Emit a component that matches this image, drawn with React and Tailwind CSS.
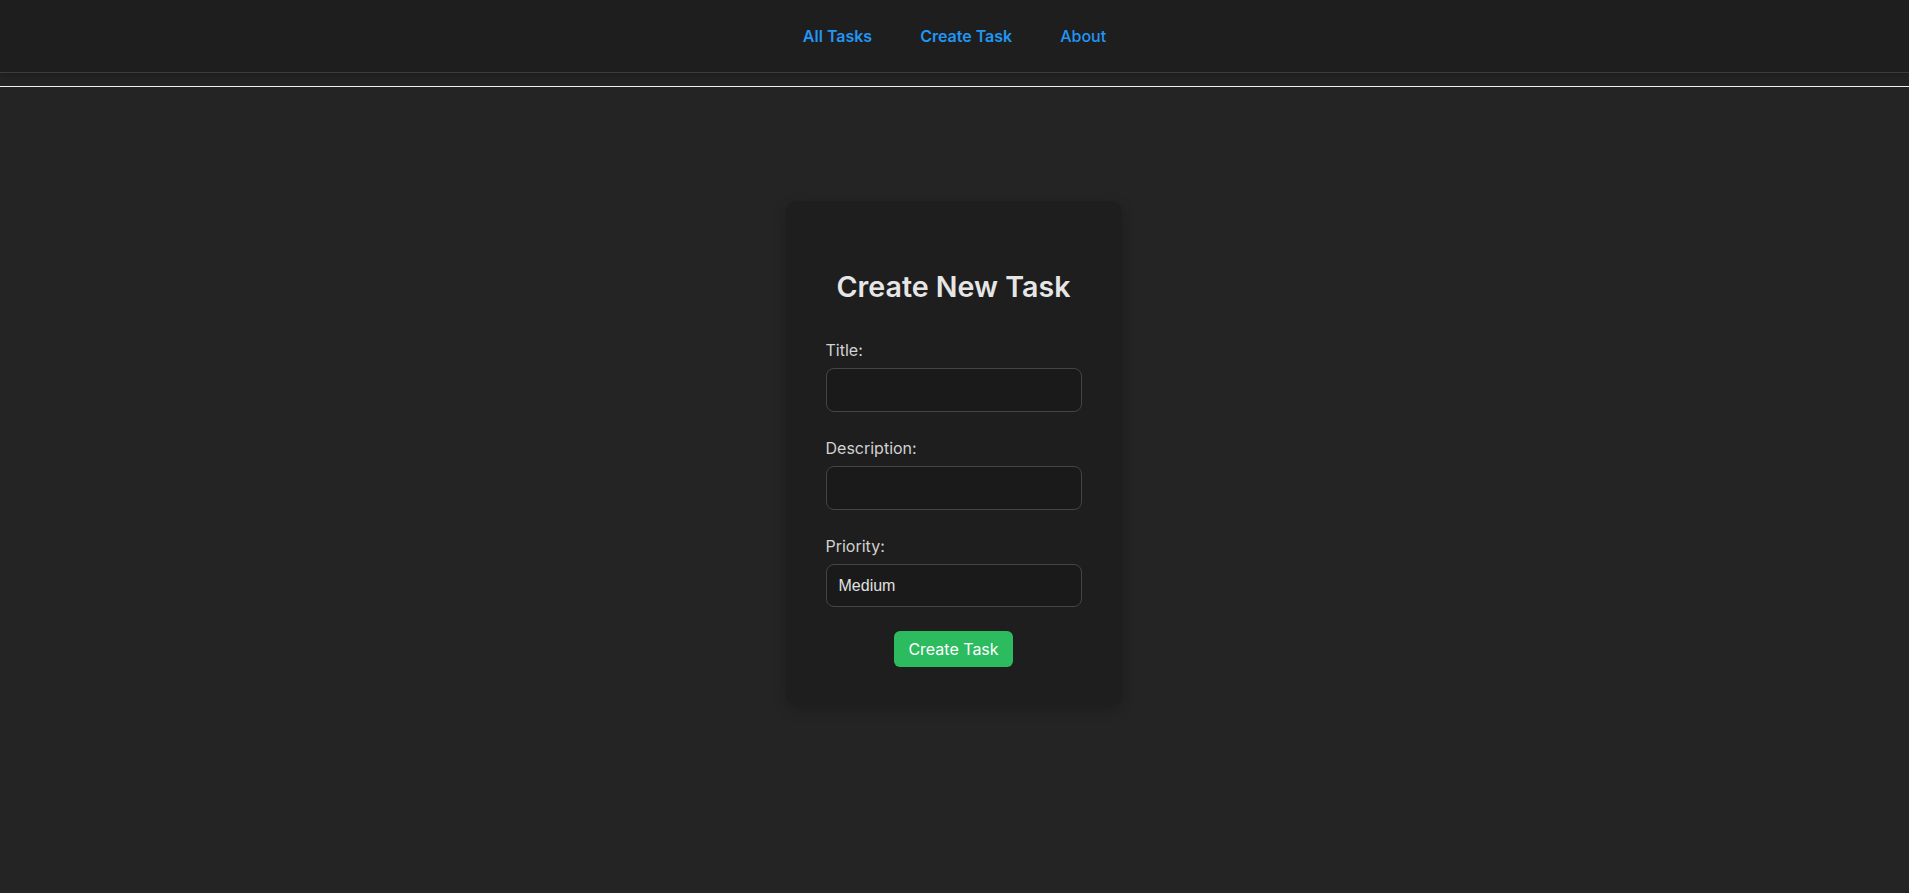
import { useState } from 'react'

const links = [
  { label: 'All Tasks', weight: 'font-semibold' },
  { label: 'Create Task', weight: 'font-semibold' },
  { label: 'About', weight: 'font-medium' },
]

function Field({ label, children }) {
  return (
    <div className="flex flex-col">
      <label className="text-base leading-6 text-[#d2d2d2] mb-[6px]">{label}</label>
      {children}
    </div>
  )
}

export default function App() {
  const [title, setTitle] = useState('')
  const [description, setDescription] = useState('')
  const [priority, setPriority] = useState('Medium')

  return (
    <div className="min-h-screen bg-[#242424] font-['Inter',sans-serif]">
      <header className="h-[73px] bg-[#1e1e1e] border-b border-[#3c3c3c] flex items-center justify-center gap-12 shadow-[0_2px_8px_rgba(0,0,0,0.25)]">
        {links.map(({ label, weight }) => (
          <a key={label} href="#" className={`text-base ${weight} text-[#2196f3]`}>
            {label}
          </a>
        ))}
      </header>
      <div className="h-[13px]" />
      <div className="h-px bg-[#f2f2f2]" />

      <main className="flex justify-center pt-[114px] pr-[2px]">
        <form
          onSubmit={(e) => e.preventDefault()}
          className="w-[336px] bg-[#1e1e1e] rounded-xl px-10 pt-[69px] pb-[39px] shadow-[0_4px_14px_rgba(0,0,0,0.2)] flex flex-col"
        >
          <h2 className="text-[28.6px] leading-[34px] font-semibold text-[#e6e6e6] text-center mb-[34px]">
            Create New Task
          </h2>

          <div className="flex flex-col gap-6">
            <Field label="Title:">
              <input
                value={title}
                onChange={(e) => setTitle(e.target.value)}
                className="h-[44px] w-full rounded-lg border border-[#454545] bg-[#1a1a1a] px-3 text-[#e0e0e0] outline-none"
              />
            </Field>
            <Field label="Description:">
              <input
                value={description}
                onChange={(e) => setDescription(e.target.value)}
                className="h-[44px] w-full rounded-lg border border-[#454545] bg-[#1a1a1a] px-3 text-[#e0e0e0] outline-none"
              />
            </Field>
            <Field label="Priority:">
              <select
                value={priority}
                onChange={(e) => setPriority(e.target.value)}
                className="h-[43px] w-full appearance-none rounded-lg border border-[#454545] bg-[#1a1a1a] px-3 text-base text-[#e0e0e0] font-['Liberation_Sans',sans-serif] outline-none"
              >
                <option>Low</option>
                <option>Medium</option>
                <option>High</option>
              </select>
            </Field>
          </div>

          <button
            type="submit"
            className="mt-6 self-center h-9 px-[14px] rounded-md bg-[#2cbb5f] text-white text-base"
          >
            Create Task
          </button>
        </form>
      </main>
    </div>
  )
}
